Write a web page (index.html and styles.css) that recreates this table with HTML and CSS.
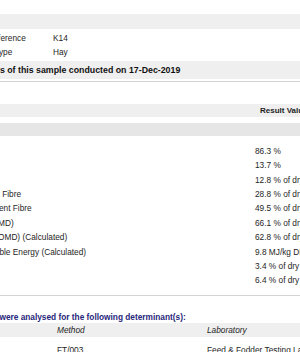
FILE: index.html
```html
<!DOCTYPE html>
<html>
<head>
<meta charset="utf-8">
<link rel="stylesheet" href="styles.css">
</head>
<body>
<div class="page">
  <div class="band band-top"></div>
  <div class="info">
    <div class="info-row"><span class="info-label">Client Reference</span><span class="info-value">K14</span></div>
    <div class="info-row"><span class="info-label">Sample Type</span><span class="info-value">Hay</span></div>
  </div>
  <div class="summary">
    <div class="summary-bar">Results of this sample conducted on 17-Dec-2019</div>
  </div>
  <div class="results">
    <div class="res-head"><span class="res-name"></span><span class="res-val-head">Result Value</span></div>
    <div class="res-sub"></div>
    <div class="res-rows">
      <div class="res-row"><span class="res-name">Dry Matter</span><span class="res-val">86.3 %</span></div>
      <div class="res-row"><span class="res-name">Moisture</span><span class="res-val">13.7 %</span></div>
      <div class="res-row"><span class="res-name">Crude Protein</span><span class="res-val">12.8 % of dry matter</span></div>
      <div class="res-row"><span class="res-name">Acid Detergent Fibre</span><span class="res-val">28.8 % of dry matter</span></div>
      <div class="res-row"><span class="res-name">Neutral Detergent Fibre</span><span class="res-val">49.5 % of dry matter</span></div>
      <div class="res-row"><span class="res-name">Digestibility (DMD)</span><span class="res-val">66.1 % of dry matter</span></div>
      <div class="res-row"><span class="res-name">Digestibility (DOMD) (Calculated)</span><span class="res-val">62.8 % of dry matter</span></div>
      <div class="res-row"><span class="res-name">Est Metabolisable Energy (Calculated)</span><span class="res-val">9.8 MJ/kg DM</span></div>
      <div class="res-row"><span class="res-name">&nbsp;</span><span class="res-val">3.4 % of dry matter</span></div>
      <div class="res-row"><span class="res-name">&nbsp;</span><span class="res-val">6.4 % of dry matter</span></div>
    </div>
  </div>
  <div class="methods">
    <div class="methods-title">Samples were analysed for the following determinant(s):</div>
    <div class="m-head"><span class="m-name"></span><span class="m-method">Method</span><span class="m-lab">Laboratory</span></div>
    <div class="m-row"><span class="m-name">Dry Matter</span><span class="m-method">FT/003</span><span class="m-lab">Feed &amp; Fodder Testing Laboratory</span></div>
  </div>
</div>
</body>
</html>
```
FILE: styles.css
```css
html, body {
  margin: 0;
  padding: 0;
  background: #fff;
  overflow: hidden;
}
body {
  font-family: "Liberation Sans", Arial, sans-serif;
  font-size: 8.3px;
  color: #1e1e1e;
}
.page {
  margin-left: -55px;
  width: 560px;
  white-space: nowrap;
}
.band-top {
  margin-top: 14px;
  height: 15px;
  background: #efefef;
}
.info {
  padding-top: 2px;
}
.info-row {
  display: flex;
  height: 14.4px;
  line-height: 15px;
}
.info-label {
  padding-left: 19px;
  width: 89px;
}
.summary {
  padding-bottom: 2px;
  border-bottom: 1px solid #d4d4d4;
  margin-top: 1px;
}
.summary-bar {
  background: #efefef;
  height: 18px;
  line-height: 18px;
  font-size: 8.8px;
  font-weight: bold;
  padding-left: 28px;
  color: #111;
}
.results {
  padding-top: 22px;
}
.res-head {
  display: flex;
  height: 13px;
  line-height: 13px;
  background: #efefef;
  font-weight: bold;
}
.res-name {
  width: 310px;
}
.res-val-head {
  padding-left: 5px;
  font-size: 8px;
}
.res-sub {
  margin-top: 6px;
  height: 13px;
  background: #e6e6e6;
}
.res-rows {
  padding-top: 8px;
}
.res-row {
  display: flex;
  height: 14.4px;
  line-height: 15px;
}
.methods {
  margin-top: 7px;
  border-top: 1px solid #d4d4d4;
  padding-top: 16px;
}
.methods-title {
  font-weight: bold;
  color: #26267a;
  padding-left: 18px;
  height: 10px;
  line-height: 10px;
}
.m-head {
  display: flex;
  margin-top: 1px;
  background: #efefef;
  height: 14px;
  line-height: 14px;
  font-style: italic;
}
.m-row {
  display: flex;
  height: 14px;
  line-height: 14px;
  margin-top: 6px;
}
.m-name {
  width: 112px;
}
.m-method {
  width: 150px;
}
```
